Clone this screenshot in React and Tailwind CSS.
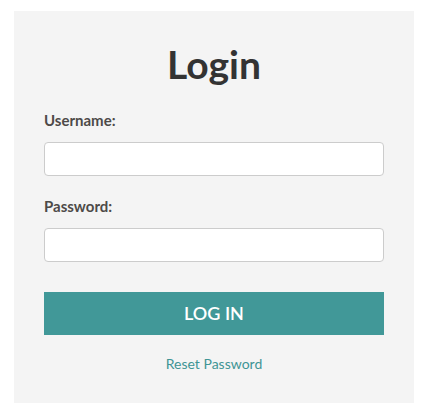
export default function App() {
  return (
    <div className="w-[430px] h-[420px] bg-white pt-[11px] pl-[14px]" style={{ fontFamily: "Lato, 'Noto Sans', sans-serif" }}>
      <div className="w-[400px] h-[392px] bg-[#f4f4f4] px-[30px] flex flex-col">
        <h1 className="mt-[30px] h-[46px] text-center text-[39px] leading-[46px] font-bold text-[#333333]">Login</h1>
        <label className="mt-[24px] text-[15px] leading-[18px] font-bold text-[#4d4a48]">Username:</label>
        <input className="mt-[13px] h-[34px] w-full rounded-[4px] border border-[#cccccc] bg-white outline-none" />
        <label className="mt-[21px] text-[15px] leading-[18px] font-bold text-[#4d4a48]">Password:</label>
        <input type="password" className="mt-[13px] h-[34px] w-full rounded-[4px] border border-[#cccccc] bg-white outline-none" />
        <button className="mt-[30px] h-[43px] w-full bg-[#419898] text-white text-[18px] font-semibold">LOG IN</button>
        <a className="mt-[20px] text-center text-[14px] leading-[18px] text-[#3f9595]">Reset Password</a>
      </div>
    </div>
  );
}
